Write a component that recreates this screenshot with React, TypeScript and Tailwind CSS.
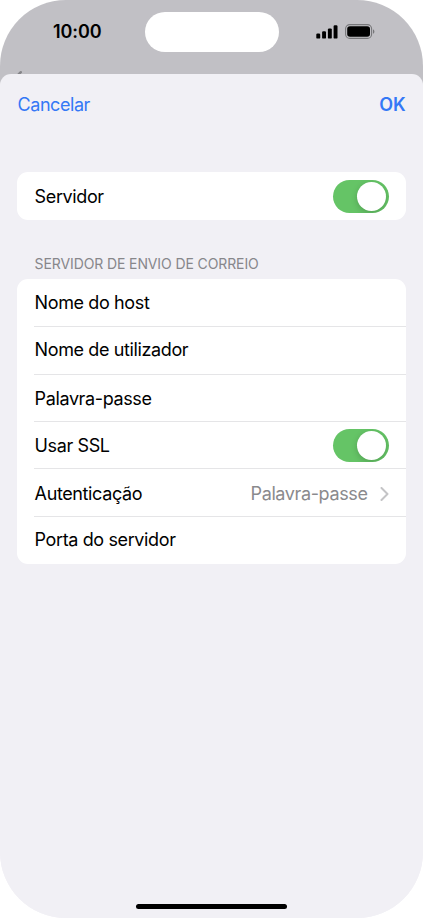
import type { ReactNode } from 'react'

function Toggle() {
  return (
    <div className="flex h-[33.5px] w-[55.5px] items-center justify-end overflow-hidden rounded-full bg-[#65c466] pr-[2.3px]">
      <div className="size-[29.3px] rounded-full bg-white shadow-[0_2px_6px_rgba(0,0,0,0.18)]" />
    </div>
  )
}

function Row({ label, className, children }: { label: string; className: string; children?: ReactNode }) {
  return (
    <li className="pl-[17px]">
      <div className={`flex items-center justify-between pr-[17.5px] tracking-[-0.38px] ${className}`}>
        <span className="pl-[0.6px]">{label}</span>
        {children}
      </div>
    </li>
  )
}

function StatusBar() {
  return (
    <header className="flex h-[74px] flex-col">
      <div className="flex h-[63px] shrink-0 items-center">
        <div className="w-[144.5px] pl-[53px] text-[18px] font-semibold tracking-[-0.1px]">10:00</div>
        <div className="h-10 w-[134px] rounded-full bg-white" />
        <svg className="ml-[37.5px]" width="22" height="14" viewBox="0 0 22 14">
          <rect x="0.3" y="8.6" width="3.9" height="5" rx="1.2" />
          <rect x="6.1" y="6.2" width="3.9" height="7.4" rx="1.2" />
          <rect x="11.9" y="3.4" width="3.9" height="10.2" rx="1.2" />
          <rect x="17.6" y="0.2" width="3.9" height="13.4" rx="1.2" />
        </svg>
        <svg className="ml-[7px]" width="30" height="15" viewBox="0 0 30 15">
          <rect x="0.6" y="0.6" width="26" height="13.8" rx="4.2" fill="none" stroke="#77777a" strokeWidth="1.1" />
          <rect x="2.2" y="2.2" width="22.8" height="10.6" rx="2.8" />
          <path d="M28 5.2c1.9.8 1.9 3.8 0 4.6z" fill="#77777a" />
        </svg>
      </div>
      <svg className="mt-[7px] ml-4" width="8" height="4" viewBox="0 0 8 4">
        <path d="M4.8 2.2 1.8 5.2" fill="none" stroke="#858589" strokeWidth="2.4" strokeLinecap="round" />
      </svg>
    </header>
  )
}

export default function App() {
  return (
    <div className="h-[918px] w-[423px] overflow-hidden bg-white font-['Inter','Liberation_Sans',sans-serif] text-[18px] leading-none text-black">
      <div className="flex h-full flex-col overflow-hidden rounded-[66px] bg-[linear-gradient(#c1c0c5_90px,#f1f0f5_90px)]">
        <StatusBar />
        <main className="flex flex-1 flex-col rounded-t-[11px] bg-[#f1f0f5] px-[17px]">
          <nav className="flex h-[61px] items-center justify-between text-[#3478f6]">
            <button className="pl-[0.5px] tracking-[-0.44px]">Cancelar</button>
            <button className="pr-[0.5px] font-semibold tracking-[-0.1px]">OK</button>
          </nav>

          <ul className="mt-[37px] rounded-[11px] bg-white">
            <Row label="Servidor" className="h-[48px] pt-px">
              <Toggle />
            </Row>
          </ul>

          <h2 className="mt-[37px] pl-[17.6px] text-[14px] leading-[14px] tracking-[-0.11px] text-[#87878b]">
            SERVIDOR DE ENVIO DE CORREIO
          </h2>
          <ul className="mt-[8px] rounded-[11px] bg-white">
            <Row label="Nome do host" className="h-[48px] border-b border-[#e5e5e7] pt-px" />
            <Row label="Nome de utilizador" className="h-[48px] border-b border-[#e5e5e7] pb-px" />
            <Row label="Palavra-passe" className="h-[47px] border-b border-[#e5e5e7] pt-px" />
            <Row label="Usar SSL" className="h-[47px] border-b border-[#e5e5e7] pt-px">
              <Toggle />
            </Row>
            <Row label="Autenticação" className="h-[48px] border-b border-[#e5e5e7] pt-[2px]">
              <div className="flex items-center text-[#8a8a8d]">
                Palavra-passe
                <svg className="ml-[12px]" width="9" height="14" viewBox="0 0 9 14" fill="none" stroke="#c4c4c6" strokeWidth="2">
                  <path d="m1.5 1 6 6-6 6" strokeLinecap="round" strokeLinejoin="round" />
                </svg>
              </div>
            </Row>
            <Row label="Porta do servidor" className="h-[47px] pb-px" />
          </ul>

          <div className="mt-auto mb-[9px] h-[5px] w-[151px] self-center rounded-full bg-black" />
        </main>
      </div>
    </div>
  )
}
